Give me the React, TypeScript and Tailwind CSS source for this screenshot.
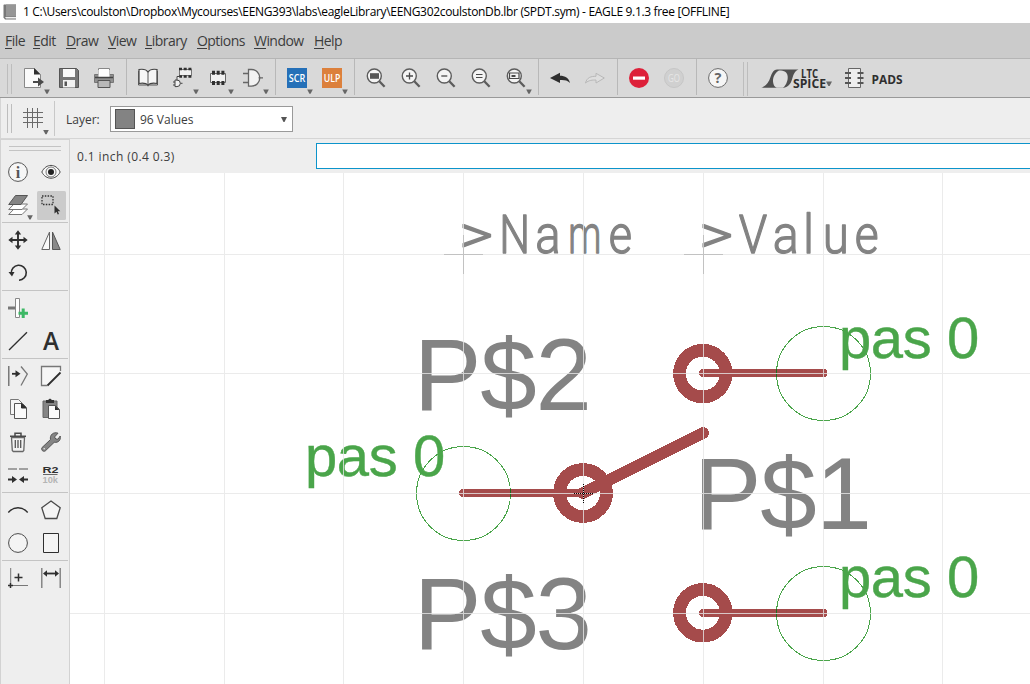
import React from "react";

const D = "#4a4a4a";
const K = "#2f2f2f";

function Icon({ children, menu, w = 35 }: { children?: React.ReactNode; menu?: boolean; w?: number }) {
  return (
    <svg width={w} height="38" viewBox={`0 0 ${w} 38`} className="block shrink-0" fill="none" stroke={D} strokeWidth="1">
      <g transform="translate(8,9)">{children}</g>
      {menu && <path d="M28.2 30.5h5.6l-2.2 4.2h-1.2z" fill="#666" stroke="none" />}
    </svg>
  );
}

function Tool({ children, menu, active }: { children?: React.ReactNode; menu?: boolean; active?: boolean }) {
  return (
    <svg width="33" height="33" viewBox="0 0 33 33" className="block shrink-0" fill="none" stroke={D} strokeWidth="1">
      {active && <rect x="2" y="3" width="29" height="29" rx="1.5" fill="#cbcbcb" stroke="none" />}
      <g transform="translate(6,7)">{children}</g>
      {menu && <path d="M25.2 27.2h5.6l-2.2 4.2h-1.2z" fill="#666" stroke="none" />}
    </svg>
  );
}

function Sep() {
  return (
    <div className="flex h-[36px] w-[9px] shrink-0 justify-center pl-[1px]">
      <div className="w-px bg-[#b8b8b8]" />
    </div>
  );
}

function Grip({ h }: { h: string }) {
  return (
    <div className={`flex w-[16px] shrink-0 gap-[3px] pl-[7px] ${h}`}>
      <div className="w-px bg-[#bdbdbd]" />
      <div className="w-px bg-[#bdbdbd]" />
    </div>
  );
}

function Lens({ children, menu }: { children: React.ReactNode; menu?: boolean }) {
  return (
    <Icon menu={menu}>
      <circle cx="8.3" cy="8" r="7" fill="#f4f4f4" strokeWidth="1.4" stroke="#5c5c5c" />
      <path d="M13.3 13.3L18.6 18.8" strokeWidth="2.3" stroke="#5c5c5c" />
      {children}
    </Icon>
  );
}

function Rule() {
  return (
    <div className="flex h-[2px] flex-col justify-end pr-[1px]">
      <div className="h-px bg-[#c4c4c4]" />
    </div>
  );
}

const Row = ({ children }: { children: React.ReactNode }) => <div className="flex h-[33px]">{children}</div>;

const menus: [string, string][] = [
  ["File", "w-[28px]"],
  ["Edit", "w-[33px]"],
  ["Draw", "w-[42px]"],
  ["View", "w-[37px]"],
  ["Library", "w-[52px]"],
  ["Options", "w-[57px]"],
  ["Window", "w-[60px]"],
  ["Help", "w-[40px]"],
];

function TopToolbar() {
  return (
    <div className="flex h-[39px] shrink-0 items-start border-b border-[#999] bg-[#d9d9d9]">
      <div className="pt-[5px]"><Grip h="h-[30px]" /></div>
      <Icon menu>
        <path d="M.5.5h10l6 6v13H.5z" fill="#fafafa" stroke="#888" />
        <path d="M10 0v6.5h6.5z" fill={K} stroke="none" />
        <path d="M9 14h6" strokeWidth="2" />
        <path d="M14 9.5l6 4.5-6 4.5z" fill={D} stroke="none" />
      </Icon>
      <Icon>
        <path d="M.5.5h17l2 2v17h-19z" fill="#777" stroke="#555" />
        <rect x="4" y="1" width="12" height="8" fill="#fafafa" stroke="none" />
        <rect x="4" y="12" width="12" height="7.5" fill="#f1f1f1" stroke="none" />
        <rect x="5.5" y="13.5" width="2.5" height="4.5" fill="#555" stroke="none" />
      </Icon>
      <Icon>
        <path d="M4.5.5h11v8h-11z" fill="#fff" stroke="#888" />
        <path d="M.5 6.5h19v8H.5z" fill="#909090" stroke="#777" />
        <path d="M4.5 2h11v7h-11z" fill="#fff" stroke="none" />
        <path d="M1 9.5h18" stroke="#444" strokeWidth="1.5" />
        <path d="M4 12.5h12v7H4z" fill="#b8b8b8" stroke="#555" />
      </Icon>
      <Sep />
      <Icon>
        <path d="M10 4C8 1 4 1 1 1.5v14c3-.5 7-.5 9 1.500 2-2 6-2 9-1.500v-14C16 1 12 1 10 4z" fill="#f6f6f6" stroke="#444" strokeWidth="1.200" />
        <path d="M10 4v13M.5 3v14h8l1.500 1 1.500-1h8V3" stroke="#555" />
      </Icon>
      <Icon menu>
        <path d="M6.500 1.500h12v6h-12z" fill="#f1f1f1" stroke="#777" />
        <path d="M6 1h13M6 8.500h13" stroke={K} strokeWidth="2.600" strokeDasharray="3 1.700" />
        <path d="M2 12h2a3.300 3.300 0 0 1 0 6.600H2zM0 14h2M0 17h2M7.500 15.300h2M4 12.500v-4h3" fill="#f1f1f1" stroke="#444" />
      </Icon>
      <Icon menu>
        <path d="M2.500 5.500h15v9h-15z" fill="#f1f1f1" stroke="#666" />
        <path d="M4 4.800h13M4 15h13" stroke={K} strokeWidth="4" strokeDasharray="3 1.700" />
      </Icon>
      <Icon menu>
        <path d="M5.500 1.500h3a8.300 8.300 0 0 1 0 16.600h-3z" fill="#f3f3f3" stroke="#666" strokeWidth="1.300" />
        <path d="M0 5.500h5M0 14.500h5M15.500 9.800H20" stroke="#666" strokeWidth="1.300" />
      </Icon>
      <Sep />
      <Icon menu>
        <rect width="20" height="20" fill="#2570b8" stroke="none" />
        <text x="10" y="14" fill="#fff" stroke="none" fontSize="10.500" textLength="16.500" lengthAdjust="spacingAndGlyphs" textAnchor="middle" className="font-['Open_Sans',sans-serif] font-semibold">SCR</text>
      </Icon>
      <Icon menu>
        <rect width="20" height="20" fill="#dc803c" stroke="none" />
        <text x="10" y="14" fill="#fff" stroke="none" fontSize="10.500" textLength="16.500" lengthAdjust="spacingAndGlyphs" textAnchor="middle" className="font-['Open_Sans',sans-serif] font-semibold">ULP</text>
      </Icon>
      <Sep />
      <Lens><rect x="4" y="5.200" width="9" height="5.600" fill="#555" stroke="none" /></Lens>
      <Lens><path d="M5 8h7M8.500 4.500v7" strokeWidth="1.300" /></Lens>
      <Lens><path d="M5.300 8h6" strokeWidth="1.300" /></Lens>
      <Lens><path d="M5 6.500h6.500M5 9.500h6.500" strokeWidth="1.200" /></Lens>
      <Lens menu><path d="M3.500 5h9.500v5.500H3.500z" strokeWidth="1.200" /><path d="M5.500 7h4v2h-4z" fill={D} stroke="none" /></Lens>
      <Sep />
      <Icon><path d="M0 10L10 4.800v3c5 0 9 2 10 7.200-3-3-6-3.200-10-3v3z" fill={K} stroke="none" /></Icon>
      <Icon><path d="M19.300 10L11 5.300v3c-5 0-9 1-10.500 6.700 3.500-3 7-3 10.500-3v3z" fill="#dedede" stroke="#b8b8b8" /></Icon>
      <Sep />
      <Icon><circle cx="10" cy="10" r="10" fill="#dd2039" stroke="none" /><rect x="4" y="8.500" width="12" height="3.200" fill="#fff" stroke="none" /></Icon>
      <Icon>
        <circle cx="10" cy="10" r="9.500" fill="#d0d0d0" stroke="#c6c6c6" />
        <text x="10" y="14" fill="#e6e6e6" stroke="none" fontSize="11" textLength="12" lengthAdjust="spacingAndGlyphs" textAnchor="middle" className="font-['Open_Sans',sans-serif] font-normal">GO</text>
      </Icon>
      <Sep />
      <Icon>
        <circle cx="10" cy="10" r="9.400" fill="#f6f6f6" stroke="#6a6a6a" />
        <text x="10" y="15.200" fill="#666" stroke="none" fontSize="14.500" textAnchor="middle" className="font-['Open_Sans',sans-serif] font-bold">?</text>
      </Icon>
      <div className="pl-[1px] pt-[3px]"><Grip h="h-[34px]" /></div>
      <svg width="82" height="38" viewBox="752 59 82 38" className="block shrink-0">
        <path d="M761.300 87.800C767 85.500 769 81.500 770.500 77C772 72.500 774 69.400 777 69.400H798.500C794 71.500 793.300 75 792 79.500C790.500 84.500 787.500 87.800 782 87.800z" fill="#505050" />
        <path d="M779 70.600C775.500 72.500 773 76.500 773 80.500C773 84.500 774.500 87.800 778 87.800H783C786.300 85 788.200 80 787.600 76C787 72.300 784.500 70.600 779 70.600z" fill="#dedede" />
        <text x="801" y="77.500" fontSize="12" textLength="17" lengthAdjust="spacingAndGlyphs" fill={K} className="font-['Open_Sans',sans-serif] font-bold">LTC</text>
        <text x="793" y="88" fontSize="12" textLength="33" lengthAdjust="spacingAndGlyphs" fill={K} className="font-['Open_Sans',sans-serif] font-bold">SPICE</text>
        <path d="M826 81.500h6l-2.400 4.500h-1.200z" fill="#666" />
      </svg>
      <svg width="90" height="38" viewBox="834 59 90 38" className="block shrink-0">
        <path d="M848.500 68.500h12v19h-12z" fill="#eee" stroke="#666" />
        <path d="M845 73h6M845 78h6M845 83h6M857.500 73h6M857.500 78h6M857.500 83h6" stroke="#555" strokeWidth="2.200" />
        <text x="871.500" y="84" fontSize="13" textLength="31" lengthAdjust="spacingAndGlyphs" fill={K} className="font-['Open_Sans',sans-serif] font-bold">PADS</text>
      </svg>
    </div>
  );
}

function Sidebar() {
  return (
    <div className="w-[70px] shrink-0 border-l border-r-[1px] border-t border-[#d2d2d2] bg-[#eee] pl-px">
      <div className="flex h-[15px] flex-col gap-[3px] pl-[7px] pt-[6px]">
        <div className="h-px w-[52px] bg-[#c4c4c4]" />
        <div className="h-px w-[52px] bg-[#c4c4c4]" />
      </div>
      <Row>
        <Tool>
          <circle cx="10" cy="10" r="9.400" fill="#f6f6f6" stroke="#555" />
          <text x="10" y="15.500" textAnchor="middle" fontSize="16" fill="#555" stroke="none" className="font-['Liberation_Serif',serif] font-bold">i</text>
        </Tool>
        <Tool>
          <path d="M.8 10C5 1.200 15 1.200 19.200 10 15 18.300 5 18.300.8 10z" fill="#f8f8f8" />
          <circle cx="10" cy="10" r="5" stroke="#777" /><circle cx="10" cy="10" r="3" fill="#222" stroke="none" />
        </Tool>
      </Row>
      <Row>
        <Tool menu>
          <path d="M.7 19.500L6 14h13.500L14 19.500z" fill="#fff" stroke="#777" />
          <path d="M.7 14.500L6 9h13.500L14 14.500z" fill="#fff" stroke="#777" />
          <path d="M.7 9.500L7.500.500h12L13 9.500z" fill="#858585" stroke="#555" />
        </Tool>
        <Tool active>
          <rect x="1" y="1" width="11" height="8.500" stroke="#333" strokeWidth="1.300" strokeDasharray="1.500 1.300" />
          <path d="M13.500 10.500v8l2-1.700 1.200 2.700 1.300-.6-1.200-2.600h2.500z" fill={K} stroke="none" />
        </Tool>
      </Row>
      <Rule />
      <Row>
        <Tool>
          <path d="M10 3v14M3 10h14" strokeWidth="1.900" stroke={K} />
          <path d="M10 .3l3.200 4.200H6.800zM10 19.700l3.200-4.200H6.800zM.3 10l4.200 3.200V6.800zM19.700 10l-4.200 3.200V6.800z" fill={K} stroke="none" />
        </Tool>
        <Tool>
          <path d="M8.500 2v17.500H.8z" fill="#fafafa" stroke="#666" />
          <path d="M11.500 2v17.500h7.700z" fill="#888" stroke="#555" />
        </Tool>
      </Row>
      <Row>
        <Tool>
          <path d="M3.300 10.500A7.500 7.500 0 1 1 11 17.200" strokeWidth="1.600" stroke={K} />
          <path d="M.5 9h6L4 13.500z" fill={K} stroke="none" />
        </Tool>
      </Row>
      <Rule />
      <Row>
        <Tool>
          <path d="M0 10h7" stroke="#777" strokeWidth="3" />
          <path d="M7.500.5h4v19h-4z" fill="#fff" stroke="#888" />
          <path d="M10.500 15.200h9.500M15.200 10.500v9.500" strokeWidth="3" stroke="#3db865" />
        </Tool>
      </Row>
      <Row>
        <Tool><path d="M1 19L19 1.200" stroke={K} strokeWidth="1.300" /></Tool>
        <Tool><text x="10" y="18.800" textAnchor="middle" fontSize="24.500" textLength="16" lengthAdjust="spacingAndGlyphs" fill={K} stroke="none" className="font-['Open_Sans',sans-serif] font-semibold">A</text></Tool>
      </Row>
      <Rule />
      <Row>
        <Tool>
          <path d="M.8 0v20" stroke="#666" strokeWidth="1.300" />
          <path d="M13 .5l6.300 7.500L13 19.500" stroke="#777" strokeWidth="1.300" />
          <path d="M4 7.800h4" stroke={K} strokeWidth="1.800" /><path d="M7.500 4.300l5 3.500-5 3.500z" fill={K} stroke="none" />
        </Tool>
        <Tool>
          <path d="M19.500 5V.5H.5v19h6" fill="#f6f6f6" stroke="#777" strokeWidth="1.300" />
          <path d="M6.500 19.500L19.500 6.500" stroke={K} strokeWidth="1.800" />
        </Tool>
      </Row>
      <Row>
        <Tool>
          <path d="M2.500.5h8l3.500 3.500v11.500H2.500z" fill="#f6f6f6" stroke="#777" />
          <path d="M6.500 4.500h8l4 4v11h-12z" fill="#fafafa" stroke="#555" /><path d="M13.500 4.500v4.500h4.500z" fill={K} stroke={K} />
        </Tool>
        <Tool>
          <path d="M2 2h14v16.500H2z" fill="#858585" stroke="#666" /><path d="M5 1h2l2-1.500 2 1.500h2v3H5z" fill="#333" stroke="none" />
          <path d="M7.500 6.500h7l4 4v9h-11z" fill="#fafafa" stroke="#555" /><path d="M14 6.500v4.500h4.500z" fill={K} stroke="none" />
        </Tool>
      </Row>
      <Row>
        <Tool>
          <path d="M3.500 5.500h13l-.7 13-1 1H5.300l-1-1z" fill="#f3f3f3" stroke="#666" strokeWidth="1.300" />
          <path d="M2 4.300h16M7 4V1.300h6V4" strokeWidth="1.500" />
          <path d="M7.300 8v8M10 8v8M12.700 8v8" stroke="#555" strokeWidth="1.300" />
        </Tool>
        <Tool>
          <path d="M17 1.200L13.500 5l1.300 2 2.200.2L19.200 4c1 4-2 7-6 6.300L4.200 19c-2.500 1-4-1-3.400-3.200L9.500 7.500C8.500 3 12.500-.5 17 1.200z" fill="#858585" stroke="#555" />
          <circle cx="3.200" cy="16.700" r=".8" fill="#eee" stroke="none" />
        </Tool>
      </Row>
      <Row>
        <Tool>
          <path d="M0 4h9M11 4h9" stroke="#888" strokeWidth="1.300" />
          <path d="M0 14.500h5M15 14.500h5" stroke={K} strokeWidth="1.800" />
          <path d="M4 11l5 3.500-5 3.500zM16 11l-5 3.500 5 3.500z" fill={K} stroke="none" />
        </Tool>
        <Tool>
          <text x="1.500" y="8" fontSize="9.800" textLength="16" lengthAdjust="spacingAndGlyphs" fill={K} stroke="none" className="font-['Liberation_Sans',sans-serif] font-bold">R2</text>
          <path d="M2 9.500h14.500" stroke="#666" />
          <text x="1.500" y="18" fontSize="9.800" textLength="15.500" lengthAdjust="spacingAndGlyphs" fill="#b5b5b5" stroke="none" className="font-['Liberation_Sans',sans-serif] font-bold">10k</text>
        </Tool>
      </Row>
      <Rule />
      <Row>
        <Tool><path d="M.3 12.500C6 6.200 14 6.200 19.700 12.500" stroke={K} strokeWidth="1.400" /></Tool>
        <Tool><path d="M10 1l9.200 6.800L15.800 18.500H4.200L.8 7.800z" fill="#f4f4f4" strokeWidth="1.300" /></Tool>
      </Row>
      <Row>
        <Tool><circle cx="10" cy="10" r="9.400" fill="#f4f4f4" /></Tool>
        <Tool><path d="M2.500.5h15v19h-15z" fill="#f4f4f4" stroke={K} /></Tool>
      </Row>
      <Rule />
      <Row>
        <Tool>
          <path d="M2.700 0v15M5 17.500h15" stroke="#777" />
          <path d="M0 17.500h5M2.500 15v5M6.500 9.500h8M10.500 5.500v8" stroke={K} strokeWidth="1.500" />
        </Tool>
        <Tool>
          <path d="M.8 0v20M19.200 0v20" stroke="#777" strokeWidth="1.300" />
          <path d="M4 5.500h12" stroke={K} strokeWidth="1.800" /><path d="M6 2.300v6.400L2 5.500zM14 2.300v6.400l4-3.200z" fill={K} stroke="none" />
        </Tool>
      </Row>
    </div>
  );
}

/* Font unit extents (left, right) of each glyph, used to fit it between two x positions. */
const extents: Record<string, [number, number]> = {
  ">": [134, 960],
  N: [175, 1285],
  a: [115, 960],
  m: [145, 1655],
  e: [100, 1010],
  V: [30, 1275],
  l: [0, 497],
  u: [145, 985],
};

const labels: [string, number, number][] = [
  [">", 463.5, 490], ["N", 503, 526.5], ["a", 538, 557.5], ["m", 571, 598.5], ["e", 611, 631],
  [">", 703.5, 730], ["V", 739.5, 767.5], ["a", 775.5, 795.5], ["l", 803, 815], ["u", 826, 845.5], ["e", 857, 877.5],
];

function Glyph({ c, from, to }: { c: string; from: number; to: number }) {
  const u = 53.5 / 2048;
  const [l, r] = extents[c];
  const s = (to - from) / ((r - l) * u);
  return (
    <text transform={`translate(${from - l * u * s},253) scale(${s},1)`} fontSize="53.5" fill="#838383" stroke="#838383" strokeWidth="1.3" strokeLinejoin="round" className="font-['Roboto',sans-serif] font-light">
      {c}
    </text>
  );
}

function Schematic() {
  const red = "#a54b4b";
  return (
    <svg width="960" height="511" viewBox="70 173 960 511" className="block bg-white" fill="none">
      {labels.map(([c, a, b], i) => <Glyph key={i} c={c} from={a} to={b} />)}
      <g fill="#838383" fontSize="101.5" className="font-['Liberation_Sans',Arial,sans-serif] tracking-[-1.2px]">
        <text x="413.700" y="409.700">P$2</text>
        <text x="693.700" y="529">P$1</text>
        <text x="413.700" y="649">P$3</text>
      </g>
      <g stroke={red} strokeWidth="12.8" shapeRendering="crispEdges">
        <circle cx="702.800" cy="373.600" r="23.300" />
        <circle cx="583" cy="493" r="23.500" />
        <circle cx="702.800" cy="612.800" r="23.300" />
        <path d="M583 493L703 433" strokeWidth="12" strokeLinecap="round" />
        <path d="M703 373H823.500M463 493H583M703 613H823.500" strokeWidth="8" strokeLinecap="round" />
      </g>
      <g stroke="#4aa54a" shapeRendering="crispEdges">
        <circle cx="823.500" cy="373.500" r="47" />
        <circle cx="463.500" cy="493.500" r="47" />
        <circle cx="823.500" cy="613.500" r="47" />
      </g>
      <path d="M776.500 369V377M510.500 489V497M776.500 609V617" stroke="#1f6d1f" shapeRendering="crispEdges" />
      <g fill="#4aa54a" stroke="#4aa54a" strokeWidth=".4" fontSize="58" className="font-['Liberation_Sans',Arial,sans-serif] tracking-[-0.4px]">
        <text x="305" y="476">pas 0</text>
        <text x="839" y="357.500">pas 0</text>
        <text x="839" y="597">pas 0</text>
      </g>
      <path d="M104.500 173V684M224.500 173V684M343.500 173V684M463.500 173V684M583.500 173V684M703.500 173V684M823.500 173V684M942.500 173V684M70 254.500H1030M70 373.500H1030M70 493.500H1030M70 613.500H1030" stroke="#e6e6e6" strokeOpacity=".8" shapeRendering="crispEdges" />
      <path d="M444 254.500H483M463.500 235V274M684 254.500H723M703.500 235V274" stroke="#c2c2c2" shapeRendering="crispEdges" />
      <path d="M574 493.500H593M583.500 484V503" stroke="#000" strokeDasharray="1 1" shapeRendering="crispEdges" />
    </svg>
  );
}

export default function App() {
  return (
    <div className="flex h-[684px] w-[1030px] flex-col overflow-hidden bg-[#eee] font-['Open_Sans',sans-serif] text-[#3c3c3c]">
      <div className="flex h-[23px] shrink-0 items-center bg-white pl-[3px] text-black">
        <svg width="13" height="16" viewBox="0 0 13 16" className="block shrink-0">
          <path d="M1 .5h12v15H2L.5 13.500V1z" fill="#777" /><path d="M3 .5h10v12H3z" fill="#969696" /><path d="M2 13h11v1.500H3z" fill="#eee" />
        </svg>
        <span className="ml-[7px] whitespace-pre text-[12px] leading-[22px] tracking-[-0.325px]">1 C:\Users\coulston\Dropbox\Mycourses\EENG393\labs\eagleLibrary\EENG302coulstonDb.lbr (SPDT.sym) - EAGLE 9.1.3 free [OFFLINE]</span>
      </div>
      <div className="flex h-[36px] shrink-0 items-center border-b border-[#b5b5b5] bg-[#cbcbcb] pl-[5px] text-[14px] tracking-[-0.55px]">
        {menus.map(([m, w]) => (
          <span key={m} className={`shrink-0 leading-[15px] ${w}`}>
            <span className="inline-block border-b border-[#3c3c3c] leading-[15px]">{m[0]}</span>{m.slice(1)}
          </span>
        ))}
      </div>
      <TopToolbar />
      <div className="flex h-[41px] shrink-0 items-start border-b border-l border-[#d5d5d5]">
        <div className="-ml-px pt-[6px]"><Grip h="h-[29px]" /></div>
        <div className="pt-[1px]">
          <svg width="35" height="38" viewBox="0 0 35 38" className="block" fill="none">
            <path d="M11.500 9v20M16.500 9v20M21.500 9v20M7 13.500h20M7 18.500h20M7 23.500h20" stroke="#6a6a6a" />
            <path d="M27.200 31h5.600l-2.200 4.200h-1.200z" fill="#666" />
          </svg>
        </div>
        <div className="ml-[3px] mt-[3px] h-[35px] w-px bg-[#c8c8c8]" />
        <span className="ml-[11px] mt-[13px] w-[44px] text-[12px] leading-[18px]">Layer:</span>
        <div className="mt-[8px] flex h-[26px] w-[183px] items-center border border-[#999] bg-white pl-[4px]">
          <div className="h-[20px] w-[20px] border border-[#555] bg-[#838383]" />
          <span className="ml-[5px] flex-1 pt-[2px] text-[12px]">96 Values</span>
          <svg width="6" height="5" viewBox="0 0 6 5" className="mr-[5px] block"><path d="M0 0h6L3.500 5h-1z" fill="#555" /></svg>
        </div>
      </div>
      <div className="flex min-h-0 flex-1">
        <Sidebar />
        <div className="flex min-w-0 flex-1 flex-col">
          <div className="flex h-[34px] shrink-0 pt-[4px]">
            <span className="w-[246px] shrink-0 pl-[7px] text-[12px] leading-[27px] tracking-[0.4px]">0.1 inch (0.4 0.3)</span>
            <div className="h-[26px] flex-1 border border-r-0 border-[#0c94cb] bg-white" />
          </div>
          <Schematic />
        </div>
      </div>
    </div>
  );
}
